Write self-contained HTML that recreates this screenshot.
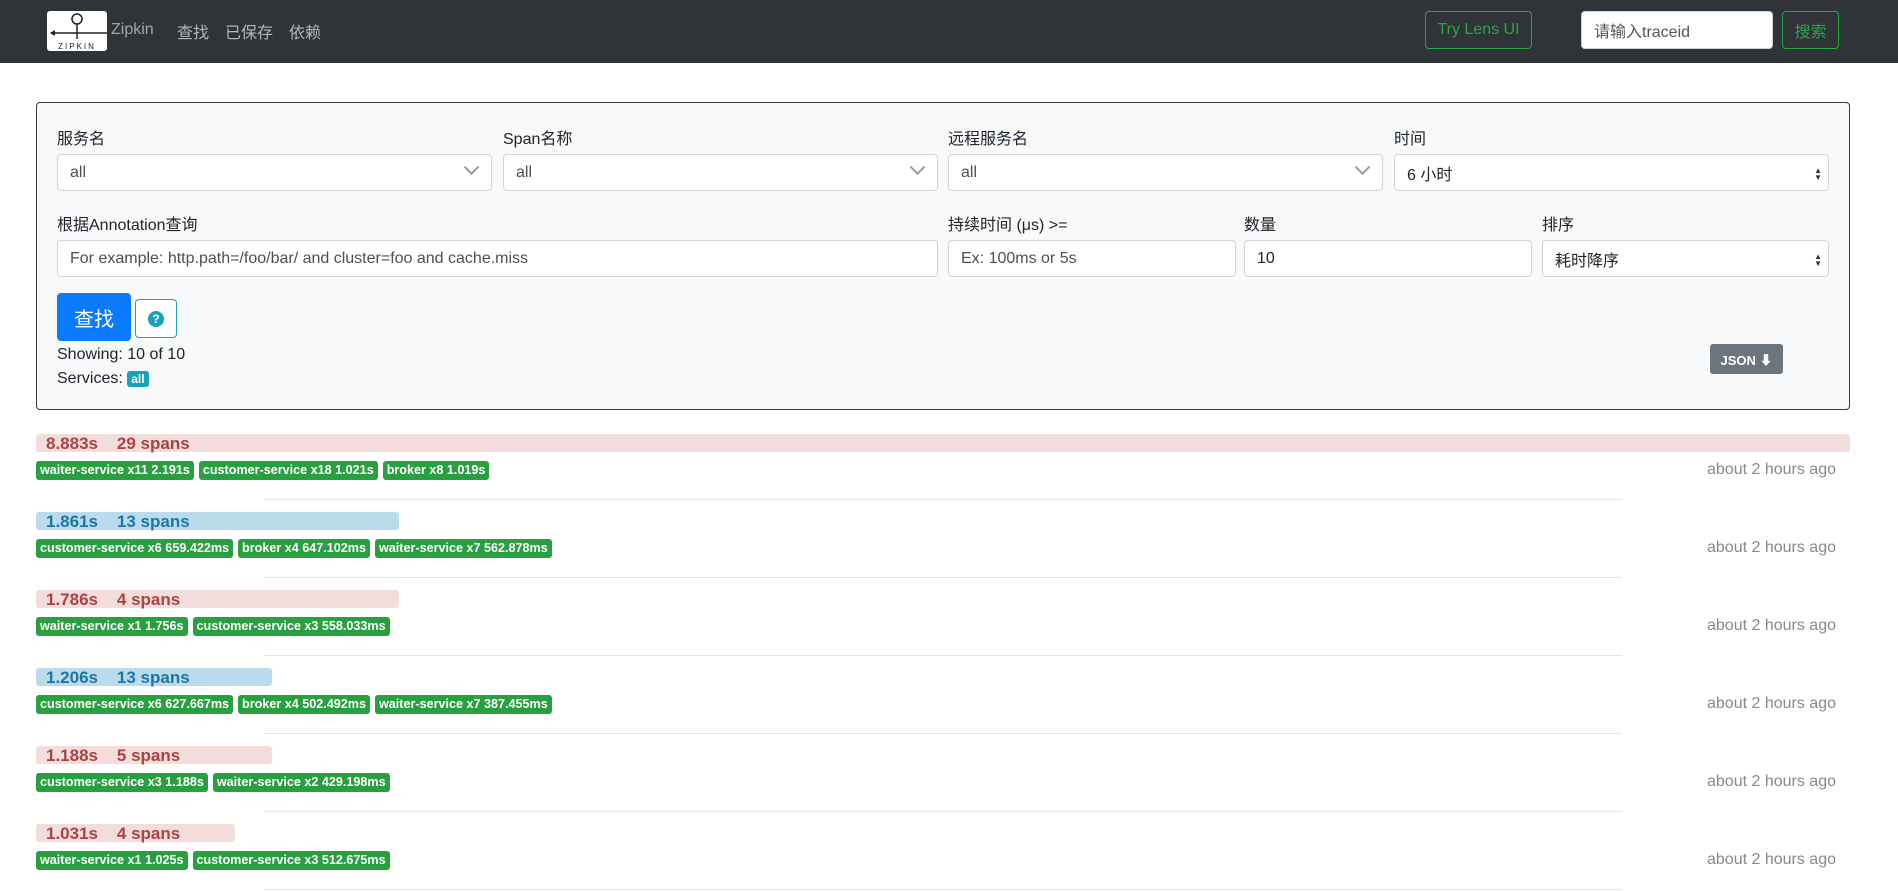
<!DOCTYPE html>
<html><head><meta charset="utf-8"><style>
*{box-sizing:border-box;margin:0;padding:0}
body{width:1898px;height:891px;overflow:hidden;background:#fff;font-family:"Liberation Sans","Noto Sans CJK SC",sans-serif;color:#212529;font-size:16px;position:relative}
.nav{position:absolute;left:0;top:0;width:1898px;height:63px;background:#303338}
.abs{position:absolute}
.logo{left:47px;top:11px;width:60px;height:40px;background:#fff;border-radius:3px}
.navl{color:#a3a6a9;font-size:16px;top:20px}
.btn-o{border:1px solid #28a745;color:#28a745;border-radius:4px;font-size:16px;display:flex;align-items:center;justify-content:center}
.panel{left:36px;top:102px;width:1814px;height:308px;background:#f8f9fa;border:1px solid #3a3a3a;border-radius:4px}
.lbl{font-size:16px;color:#212529}
.inp{background:#fff;border:1px solid #ced4da;border-radius:4px;height:37px;font-size:16px;color:#495057;padding:0 12px;display:flex;align-items:center}
.chev{position:absolute;right:14px;top:11px;width:11px;height:11px;border-right:2px solid #999;border-bottom:2px solid #999;transform:rotate(45deg) translate(-3px,-3px)}
.arr{position:absolute;right:6px;top:12px;font-size:8px;line-height:7px;color:#333}
.bar{height:18px;border-radius:3px;font-weight:bold;font-size:17px;line-height:19px;padding-left:10px}
.pink{background:#f2dcdc;color:#a94442}
.blue{background:#b9dbec;color:#1b77a6}
.tags{display:flex;gap:5px}
.tag{background:#28a03f;color:#fff;font-weight:bold;font-size:12.6px;height:19px;line-height:19px;padding:0 4px;border-radius:3px}
.ago{color:#888;font-size:16px}
.hr{height:1px;background:#e5e5e5}
</style></head><body>
<div class="nav">
 <div class="abs logo"><svg width="60" height="40" viewBox="0 0 60 40"><circle cx="30" cy="8" r="5" fill="none" stroke="#222" stroke-width="1.5"/><line x1="30" y1="13" x2="30" y2="28" stroke="#222" stroke-width="1.5"/><line x1="4" y1="22" x2="60" y2="22" stroke="#222" stroke-width="1.5"/><path d="M3 22 L8 19 L8 25 Z" fill="#222"/><text x="30" y="38" font-size="8" text-anchor="middle" letter-spacing="2" fill="#222" font-family="Liberation Sans">ZIPKIN</text></svg></div>
 <div class="abs navl" style="left:111px;top:21px">Zipkin</div>
 <div class="abs navl" style="left:177px;top:19px;color:#b3b6b9">查找</div>
 <div class="abs navl" style="left:225px;top:19px;color:#b3b6b9">已保存</div>
 <div class="abs navl" style="left:289px;top:19px;color:#b3b6b9">依赖</div>
 <div class="abs btn-o" style="left:1425px;top:11px;width:107px;height:38px">Try Lens UI</div>
 <div class="abs inp" style="left:1581px;top:11px;width:192px;height:38px;color:#555">请输入traceid</div>
 <div class="abs btn-o" style="left:1782px;top:11px;width:57px;height:38px">搜索</div>
</div>
<div class="abs panel">
 <div class="abs lbl" style="left:20px;top:22px">服务名</div>
 <div class="abs lbl" style="left:466px;top:22px">Span名称</div>
 <div class="abs lbl" style="left:911px;top:22px">远程服务名</div>
 <div class="abs lbl" style="left:1357px;top:22px">时间</div>
 <div class="abs inp" style="left:20px;top:51px;width:435px">all<span class="chev"></span></div>
 <div class="abs inp" style="left:466px;top:51px;width:435px">all<span class="chev"></span></div>
 <div class="abs inp" style="left:911px;top:51px;width:435px">all<span class="chev"></span></div>
 <div class="abs inp" style="left:1357px;top:51px;width:435px;color:#212529">6 小时<span class="arr">▲<br>▼</span></div>
 <div class="abs lbl" style="left:20px;top:108px">根据Annotation查询</div>
 <div class="abs lbl" style="left:911px;top:108px">持续时间 (μs) &gt;=</div>
 <div class="abs lbl" style="left:1207px;top:108px">数量</div>
 <div class="abs lbl" style="left:1505px;top:108px">排序</div>
 <div class="abs inp" style="left:20px;top:137px;width:881px">For example: http.path=/foo/bar/ and cluster=foo and cache.miss</div>
 <div class="abs inp" style="left:911px;top:137px;width:288px">Ex: 100ms or 5s</div>
 <div class="abs inp" style="left:1207px;top:137px;width:288px;color:#212529">10</div>
 <div class="abs inp" style="left:1505px;top:137px;width:287px;color:#212529">耗时降序<span class="arr">▲<br>▼</span></div>
 <div class="abs" style="left:20px;top:190px;width:74px;height:48px;background:#0a7bff;border-radius:4px;color:#fff;font-size:20px;display:flex;align-items:center;justify-content:center">查找</div>
 <div class="abs" style="left:98px;top:196px;width:42px;height:39px;border:1px solid #17a2b8;border-radius:4px;background:#fff;display:flex;align-items:center;justify-content:center"><span style="width:16px;height:16px;border-radius:50%;background:#17a2b8;color:#fff;font-size:12px;font-weight:bold;text-align:center;line-height:16px">?</span></div>
 <div class="abs lbl" style="left:20px;top:243px">Showing: 10 of 10</div>
 <div class="abs lbl" style="left:20px;top:267px">Services: <span style="background:#17a2b8;color:#fff;font-size:12px;font-weight:bold;padding:1px 4px;border-radius:3px">all</span></div>
 <div class="abs" style="left:1673px;top:241px;width:73px;height:30px;background:#6c757d;border-radius:3px;color:#fff;font-size:13px;font-weight:bold;display:flex;align-items:center;justify-content:center">JSON ⬇</div>
</div>

<div class="abs" style="left:36px;top:434px;width:1814px">
 <div class="bar pink" style="width:1814px">8.883s&nbsp;&nbsp;&nbsp;&nbsp;29 spans</div>
 <div class="tags" style="margin-top:9px"><span class="tag">waiter-service x11 2.191s</span><span class="tag">customer-service x18 1.021s</span><span class="tag">broker x8 1.019s</span></div>
</div>
<div class="abs ago" style="right:62px;top:461px">about 2 hours ago</div>
<div class="abs hr" style="left:264px;top:499px;width:1358px"></div>

<div class="abs" style="left:36px;top:512px">
 <div class="bar blue" style="width:363px">1.861s&nbsp;&nbsp;&nbsp;&nbsp;13 spans</div>
 <div class="tags" style="margin-top:9px"><span class="tag">customer-service x6 659.422ms</span><span class="tag">broker x4 647.102ms</span><span class="tag">waiter-service x7 562.878ms</span></div>
</div>
<div class="abs ago" style="right:62px;top:539px">about 2 hours ago</div>
<div class="abs hr" style="left:264px;top:577px;width:1358px"></div>

<div class="abs" style="left:36px;top:590px">
 <div class="bar pink" style="width:363px">1.786s&nbsp;&nbsp;&nbsp;&nbsp;4 spans</div>
 <div class="tags" style="margin-top:9px"><span class="tag">waiter-service x1 1.756s</span><span class="tag">customer-service x3 558.033ms</span></div>
</div>
<div class="abs ago" style="right:62px;top:617px">about 2 hours ago</div>
<div class="abs hr" style="left:264px;top:655px;width:1358px"></div>

<div class="abs" style="left:36px;top:668px">
 <div class="bar blue" style="width:236px">1.206s&nbsp;&nbsp;&nbsp;&nbsp;13 spans</div>
 <div class="tags" style="margin-top:9px"><span class="tag">customer-service x6 627.667ms</span><span class="tag">broker x4 502.492ms</span><span class="tag">waiter-service x7 387.455ms</span></div>
</div>
<div class="abs ago" style="right:62px;top:695px">about 2 hours ago</div>
<div class="abs hr" style="left:264px;top:733px;width:1358px"></div>

<div class="abs" style="left:36px;top:746px">
 <div class="bar pink" style="width:236px">1.188s&nbsp;&nbsp;&nbsp;&nbsp;5 spans</div>
 <div class="tags" style="margin-top:9px"><span class="tag">customer-service x3 1.188s</span><span class="tag">waiter-service x2 429.198ms</span></div>
</div>
<div class="abs ago" style="right:62px;top:773px">about 2 hours ago</div>
<div class="abs hr" style="left:264px;top:811px;width:1358px"></div>

<div class="abs" style="left:36px;top:824px">
 <div class="bar pink" style="width:199px">1.031s&nbsp;&nbsp;&nbsp;&nbsp;4 spans</div>
 <div class="tags" style="margin-top:9px"><span class="tag">waiter-service x1 1.025s</span><span class="tag">customer-service x3 512.675ms</span></div>
</div>
<div class="abs ago" style="right:62px;top:851px">about 2 hours ago</div>
<div class="abs hr" style="left:264px;top:889px;width:1358px"></div>
</body></html>
